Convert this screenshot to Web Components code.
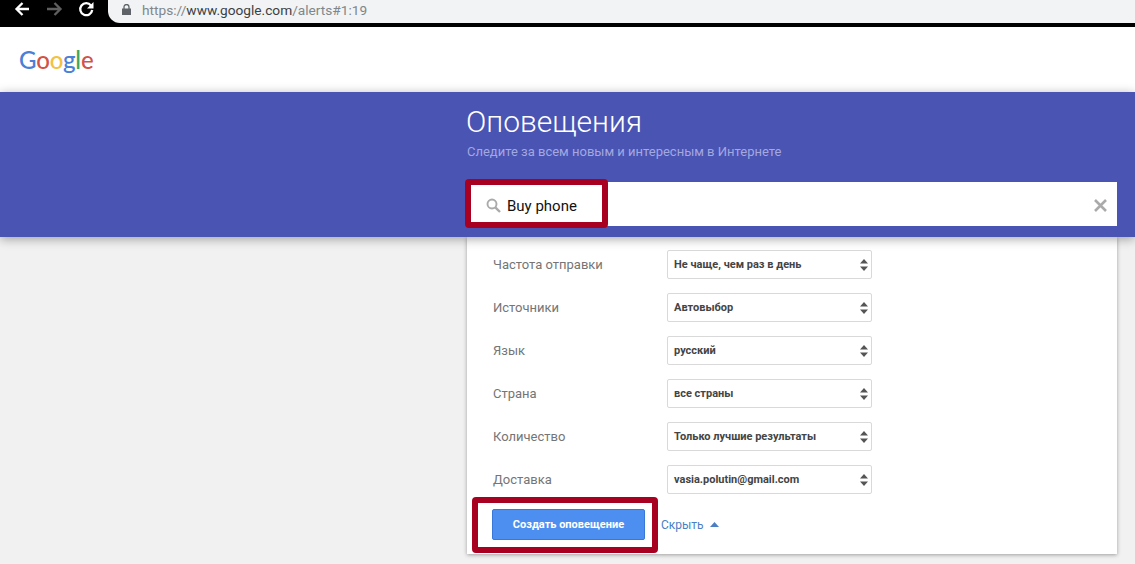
<!DOCTYPE html>
<html lang="ru">
<head>
<meta charset="utf-8">
<title>Оповещения</title>
<style>
html, body { margin: 0; height: 564px; overflow: hidden; }
body { background: #f1f1f1; font-family: Roboto, "Liberation Sans", sans-serif; }
</style>
</head>
<body>
<browser-bar></browser-bar>
<site-header></site-header>
<alerts-hero heading="Оповещения" sub="Следите за всем новым и интересным в Интернете">
  <search-box value="Buy phone"></search-box>
</alerts-hero>
<alert-card>
  <alert-row label="Частота отправки" value="Не чаще, чем раз в день"></alert-row>
  <alert-row label="Источники" value="Автовыбор"></alert-row>
  <alert-row label="Язык" value="русский"></alert-row>
  <alert-row label="Страна" value="все страны"></alert-row>
  <alert-row label="Количество" value="Только лучшие результаты"></alert-row>
  <alert-row label="Доставка" value="vasia.polutin@gmail.com"></alert-row>
  <alert-actions slot="actions"></alert-actions>
</alert-card>

<script>
class BrowserBar extends HTMLElement {
  constructor() {
    super()
    this.attachShadow({mode: 'open'}).innerHTML = `
<style>
:host { display: flex; height: 27px; background: #000; align-items: flex-start; }
.nav { display: flex; width: 108px; height: 20px; flex: none; }
.nav svg { display: block; }
.url {
  flex: 1; height: 23px; background: #f1f3f4; border-bottom-left-radius: 12px;
  display: flex; align-items: center; padding-left: 14px; gap: 11px;
  font: 13.7px/19px Roboto, sans-serif; color: #80868b; white-space: nowrap;
}
.url b { font-weight: 400; color: #3c4043; }
.url span { position: relative; top: -1px; }
.url svg { position: relative; top: -2px; }
</style>
<div class="nav">
  <svg width="108" height="20" viewBox="0 0 108 20" fill="none" stroke-width="2.300">
    <path d="M29 9H17M22.500 3l-6 6 6 6" stroke="#fff"/>
    <path d="M47 9h13M54.500 3l6 6-6 6" stroke="#5f5f5f"/>
    <path d="M91 5.500a6 6 0 1 0 1.200 4.500" stroke="#fff" stroke-width="2.300"/>
    <path d="M93.500 2v6.500h-6.500z" fill="#fff"/>
  </svg>
</div>
<div class="url">
  <svg width="9" height="11" viewBox="0 0 9 11"><path d="M0 4.500h9V11H0z" fill="#5f6368"/><path d="M2 5V3a2.500 2.500 0 0 1 5 0v2" fill="none" stroke="#5f6368" stroke-width="1.300"/></svg>
  <span>https://<b>www.google.com</b>/alerts#1:19</span>
</div>`
  }
}

class SiteHeader extends HTMLElement {
  constructor() {
    super()
    this.attachShadow({mode: 'open'}).innerHTML = `
<style>
:host { display: flex; height: 65px; background: #fff; align-items: center; padding-left: 19px; }
.logo { font: 500 24px/1 Lato, Roboto, sans-serif; letter-spacing: -.2px; }
.b { color: #4a80d6; } .r { color: #d2524a; } .y { color: #f2c240; } .g { color: #3fa757; }
</style>
<div class="logo"><span class="b">G</span><span class="r">o</span><span class="y">o</span><span class="b">g</span><span class="g">l</span><span class="r">e</span></div>`
  }
}

class AlertsHero extends HTMLElement {
  constructor() {
    super()
    this.attachShadow({mode: 'open'}).innerHTML = `
<style>
:host {
  display: block; position: relative; z-index: 2; box-sizing: border-box; height: 145px;
  background: #4a54b3; padding: 11px 18px 0 467px;
  box-shadow: 0 2px 10px rgba(0,0,0,.35);
}
h1 { margin: 0 0 0 -1px; font: 300 30px/38px Roboto, sans-serif; color: #fff; }
p { margin: 1px 0 0; font: 400 13px/20px Roboto, sans-serif; color: #a3a8e0; }
.search { margin-top: 20px; }
</style>
<h1></h1>
<p></p>
<div class="search"><slot></slot></div>`
    this.shadowRoot.querySelector('h1').textContent = this.getAttribute('heading')
    this.shadowRoot.querySelector('p').textContent = this.getAttribute('sub')
  }
}

class RedMark extends HTMLElement {
  constructor() {
    super()
    this.attachShadow({mode: 'open'}).innerHTML = `
<style>
:host {
  display: block; position: absolute; box-sizing: border-box; pointer-events: none;
  border: 6px solid #a80020; border-radius: 4px;
}
</style>`
  }
}

class SearchBox extends HTMLElement {
  constructor() {
    super()
    this.attachShadow({mode: 'open'}).innerHTML = `
<style>
:host {
  display: flex; position: relative; align-items: center; box-sizing: border-box; height: 44px; background: #fff;
  padding: 2px 9px 0 19px; color: #111; font: 400 15px/20px Roboto, sans-serif;
}
.text { margin: 2px 0 0 6px; flex: 1; }
red-mark { left: -2px; top: -3px; width: 143px; height: 49px; }
</style>
<svg width="15" height="15" viewBox="0 0 15 15" fill="none" stroke="#aaa"><circle cx="6" cy="6" r="4.500" stroke-width="1.900"/><path d="M9.300 9.300l4.700 4.700" stroke-width="2.400"/></svg>
<span class="text"></span>
<svg width="15" height="15" viewBox="0 0 15 15" stroke="#aaa" stroke-width="2.600"><path d="M2 2l11 11M13 2L2 13"/></svg>
<red-mark></red-mark>`
    this.shadowRoot.querySelector('.text').textContent = this.getAttribute('value')
  }
}

class AlertCard extends HTMLElement {
  constructor() {
    super()
    this.attachShadow({mode: 'open'}).innerHTML = `
<style>
:host {
  display: flex; flex-direction: column; gap: 14px; box-sizing: border-box;
  width: 650px; height: 317px; margin-left: 467px; padding: 13px 0 14px 25px;
  background: #fff; box-shadow: 0 1px 4px rgba(0,0,0,.35);
}
.rows { display: flex; flex-direction: column; gap: 14px; }
.actions { margin-top: 1px; }
</style>
<div class="rows"><slot></slot></div>
<div class="actions"><slot name="actions"></slot></div>`
  }
}

class AlertRow extends HTMLElement {
  constructor() {
    super()
    this.attachShadow({mode: 'open'}).innerHTML = `
<style>
:host { display: flex; align-items: center; height: 29px; }
.label { box-sizing: border-box; width: 175px; padding-left: 1px; font: 400 13px/20px Roboto, sans-serif; color: #757575; }
.select {
  box-sizing: border-box; width: 205px; height: 29px; display: flex; align-items: center; justify-content: space-between;
  padding: 0 3px 0 6px; background: #fff; border: 1px solid #d9d9d9; border-radius: 2px;
  font: 700 11px/16px Roboto, sans-serif; color: #444;
}
svg { display: block; }
</style>
<div class="label"></div>
<div class="select"><span></span>
  <svg width="8" height="12" viewBox="0 0 8 12" fill="#555"><path d="M4 0l4 4.500H0zM0 7.500h8L4 12z"/></svg>
</div>`
    this.shadowRoot.querySelector('.label').textContent = this.getAttribute('label')
    this.shadowRoot.querySelector('.select span').textContent = this.getAttribute('value')
  }
}

class AlertActions extends HTMLElement {
  constructor() {
    super()
    this.attachShadow({mode: 'open'}).innerHTML = `
<style>
:host { display: flex; position: relative; align-items: center; height: 31px; }
button {
  box-sizing: border-box; width: 153px; height: 31px; padding: 0; border: 1px solid #3a78d8; border-radius: 2px;
  background: #4d8ff0; color: #fff; font: 700 11px/16px Roboto, sans-serif;
}
a { margin-left: 16px; color: #4a7fc4; font: 400 12px/20px Roboto, sans-serif; text-decoration: none; }
svg { margin-left: 6px; }
red-mark { left: -20px; top: -12px; width: 186px; height: 56px; }
</style>
<button>Создать оповещение</button>
<a href="#">Скрыть</a>
<svg width="9" height="5" viewBox="0 0 9 5" fill="#4a7fc4"><path d="M4.500 0L9 5H0z"/></svg>
<red-mark></red-mark>`
  }
}

customElements.define('red-mark', RedMark)
customElements.define('browser-bar', BrowserBar)
customElements.define('site-header', SiteHeader)
customElements.define('alerts-hero', AlertsHero)
customElements.define('search-box', SearchBox)
customElements.define('alert-card', AlertCard)
customElements.define('alert-row', AlertRow)
customElements.define('alert-actions', AlertActions)
</script>
</body>
</html>
